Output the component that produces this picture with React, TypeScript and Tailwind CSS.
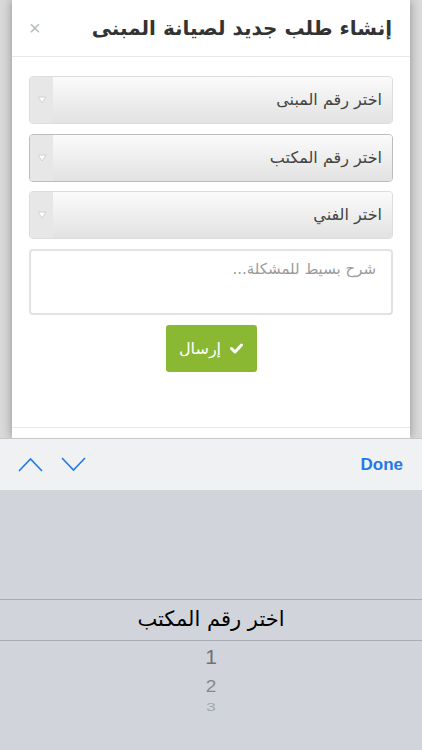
const arabic = { fontFamily: '"DejaVu Sans", "Noto Sans", sans-serif' };

function SelectBox({ label, focused }: { label: string; focused?: boolean }) {
  return (
    <div
      className={`flex h-[48px] overflow-hidden rounded-[4px] border ${
        focused ? "border-[#bdbdbd]" : "border-[#dcdcdc]"
      } shadow-[inset_0_1px_2px_rgba(0,0,0,0.06)]`}
    >
      <div className="flex w-[23px] shrink-0 items-center justify-center bg-[#e7e7e7]">
        <svg width="10" height="8" viewBox="0 0 10 8" className="shrink-0">
          <path d="M1 1 L9 1 L5 7 Z" fill="#ffffff" stroke="#cfcfcf" strokeWidth="1" strokeLinejoin="round" />
        </svg>
      </div>
      <div
        dir="rtl"
        className="flex flex-1 items-center bg-gradient-to-b from-[#fbfbfb] to-[#e2e2e2] pr-[10px] text-[16px] text-[#444]"
        style={arabic}
      >
        {label}
      </div>
    </div>
  );
}

export default function App() {
  return (
    <div className="flex h-[750px] w-[422px] flex-col overflow-hidden">
      {/* page behind the modal */}
      <div className="flex h-[438px] justify-center bg-gradient-to-r from-[#dadada] via-[#cfcfcf] to-[#dadada]">
        <div className="flex w-[398px] flex-col bg-white shadow-[0_0_10px_rgba(0,0,0,0.35)]">
          {/* header */}
          <div className="flex h-[57px] items-center justify-between border-b border-[#e8e8e8] pl-[17px] pr-[18px]">
            <span className="text-[20px] leading-none text-[#bbb]" style={{ fontFamily: '"Liberation Sans", sans-serif' }}>
              ×
            </span>
            <span dir="rtl" className="text-[20px] font-bold text-[#333]" style={arabic}>
              إنشاء طلب جديد لصيانة المبنى
            </span>
          </div>

          {/* body */}
          <div className="flex flex-col px-[17px] pt-[19px]">
            <SelectBox label="اختر رقم المبنى" />
            <div className="mt-[10px]">
              <SelectBox label="اختر رقم المكتب" focused />
            </div>
            <div className="mt-[9px]">
              <SelectBox label="اختر الفني" />
            </div>
            <div
              dir="rtl"
              className="mt-[10px] h-[66px] rounded-[4px] border-2 border-[#e2e2e2] px-[15px] pt-[7px] text-[15px] text-[#9a9a9a]"
              style={arabic}
            >
              شرح بسيط للمشكلة...
            </div>
            <div className="mt-[10px] flex justify-center">
              <div
                dir="rtl"
                className="flex h-[47px] w-[91px] items-center justify-center gap-[9px] rounded-[3px] bg-[#8ab833] text-[16px] text-white"
                style={arabic}
              >
                <svg width="13" height="11" viewBox="0 0 13 11">
                  <path d="M1.5 5.5 L5 9 L11.5 2" fill="none" stroke="white" strokeWidth="3" strokeLinecap="round" strokeLinejoin="round" />
                </svg>
                <span>إرسال</span>
              </div>
            </div>
          </div>
          <div className="mt-[55px] border-t border-[#e6e6e6]" />
        </div>
      </div>

      {/* keyboard accessory bar */}
      <div className="flex h-[52px] items-center justify-between border-t border-[#c9c9c9] bg-[#f0f1f3] pl-[18px] pr-[19px]">
        <div className="flex items-center gap-[18px] text-[#1f7ae6]">
          <svg width="25" height="15" viewBox="0 0 25 15">
            <path d="M1 14 L12.5 2 L24 14" fill="none" stroke="currentColor" strokeWidth="1.6" />
          </svg>
          <svg width="25" height="15" viewBox="0 0 25 15">
            <path d="M1 1 L12.5 13 L24 1" fill="none" stroke="currentColor" strokeWidth="1.6" />
          </svg>
        </div>
        <span className="text-[17px] font-bold text-[#1f7ae6]" style={{ fontFamily: '"Liberation Sans", sans-serif' }}>
          Done
        </span>
      </div>

      {/* picker */}
      <div className="flex flex-1 flex-col bg-[#d1d4da]">
        <div className="h-[109px]" />
        <div className="flex h-[42px] items-center justify-center border-y border-[#a9adb5]">
          <span dir="rtl" className="text-[21px] text-black" style={arabic}>
            اختر رقم المكتب
          </span>
        </div>
        <div className="flex flex-col items-center" style={{ fontFamily: '"Liberation Sans", sans-serif' }}>
          <span className="mt-[4px] text-[21px] leading-[24px] text-[#6e7177]">1</span>
          <span className="mt-[9px] origin-top scale-y-[0.85] text-[19px] leading-[22px] text-[#85888e]">2</span>
          <span className="mt-[2px] origin-top scale-y-[0.6] text-[17px] leading-[20px] text-[#a3a6ab]">3</span>
        </div>
      </div>
    </div>
  );
}
